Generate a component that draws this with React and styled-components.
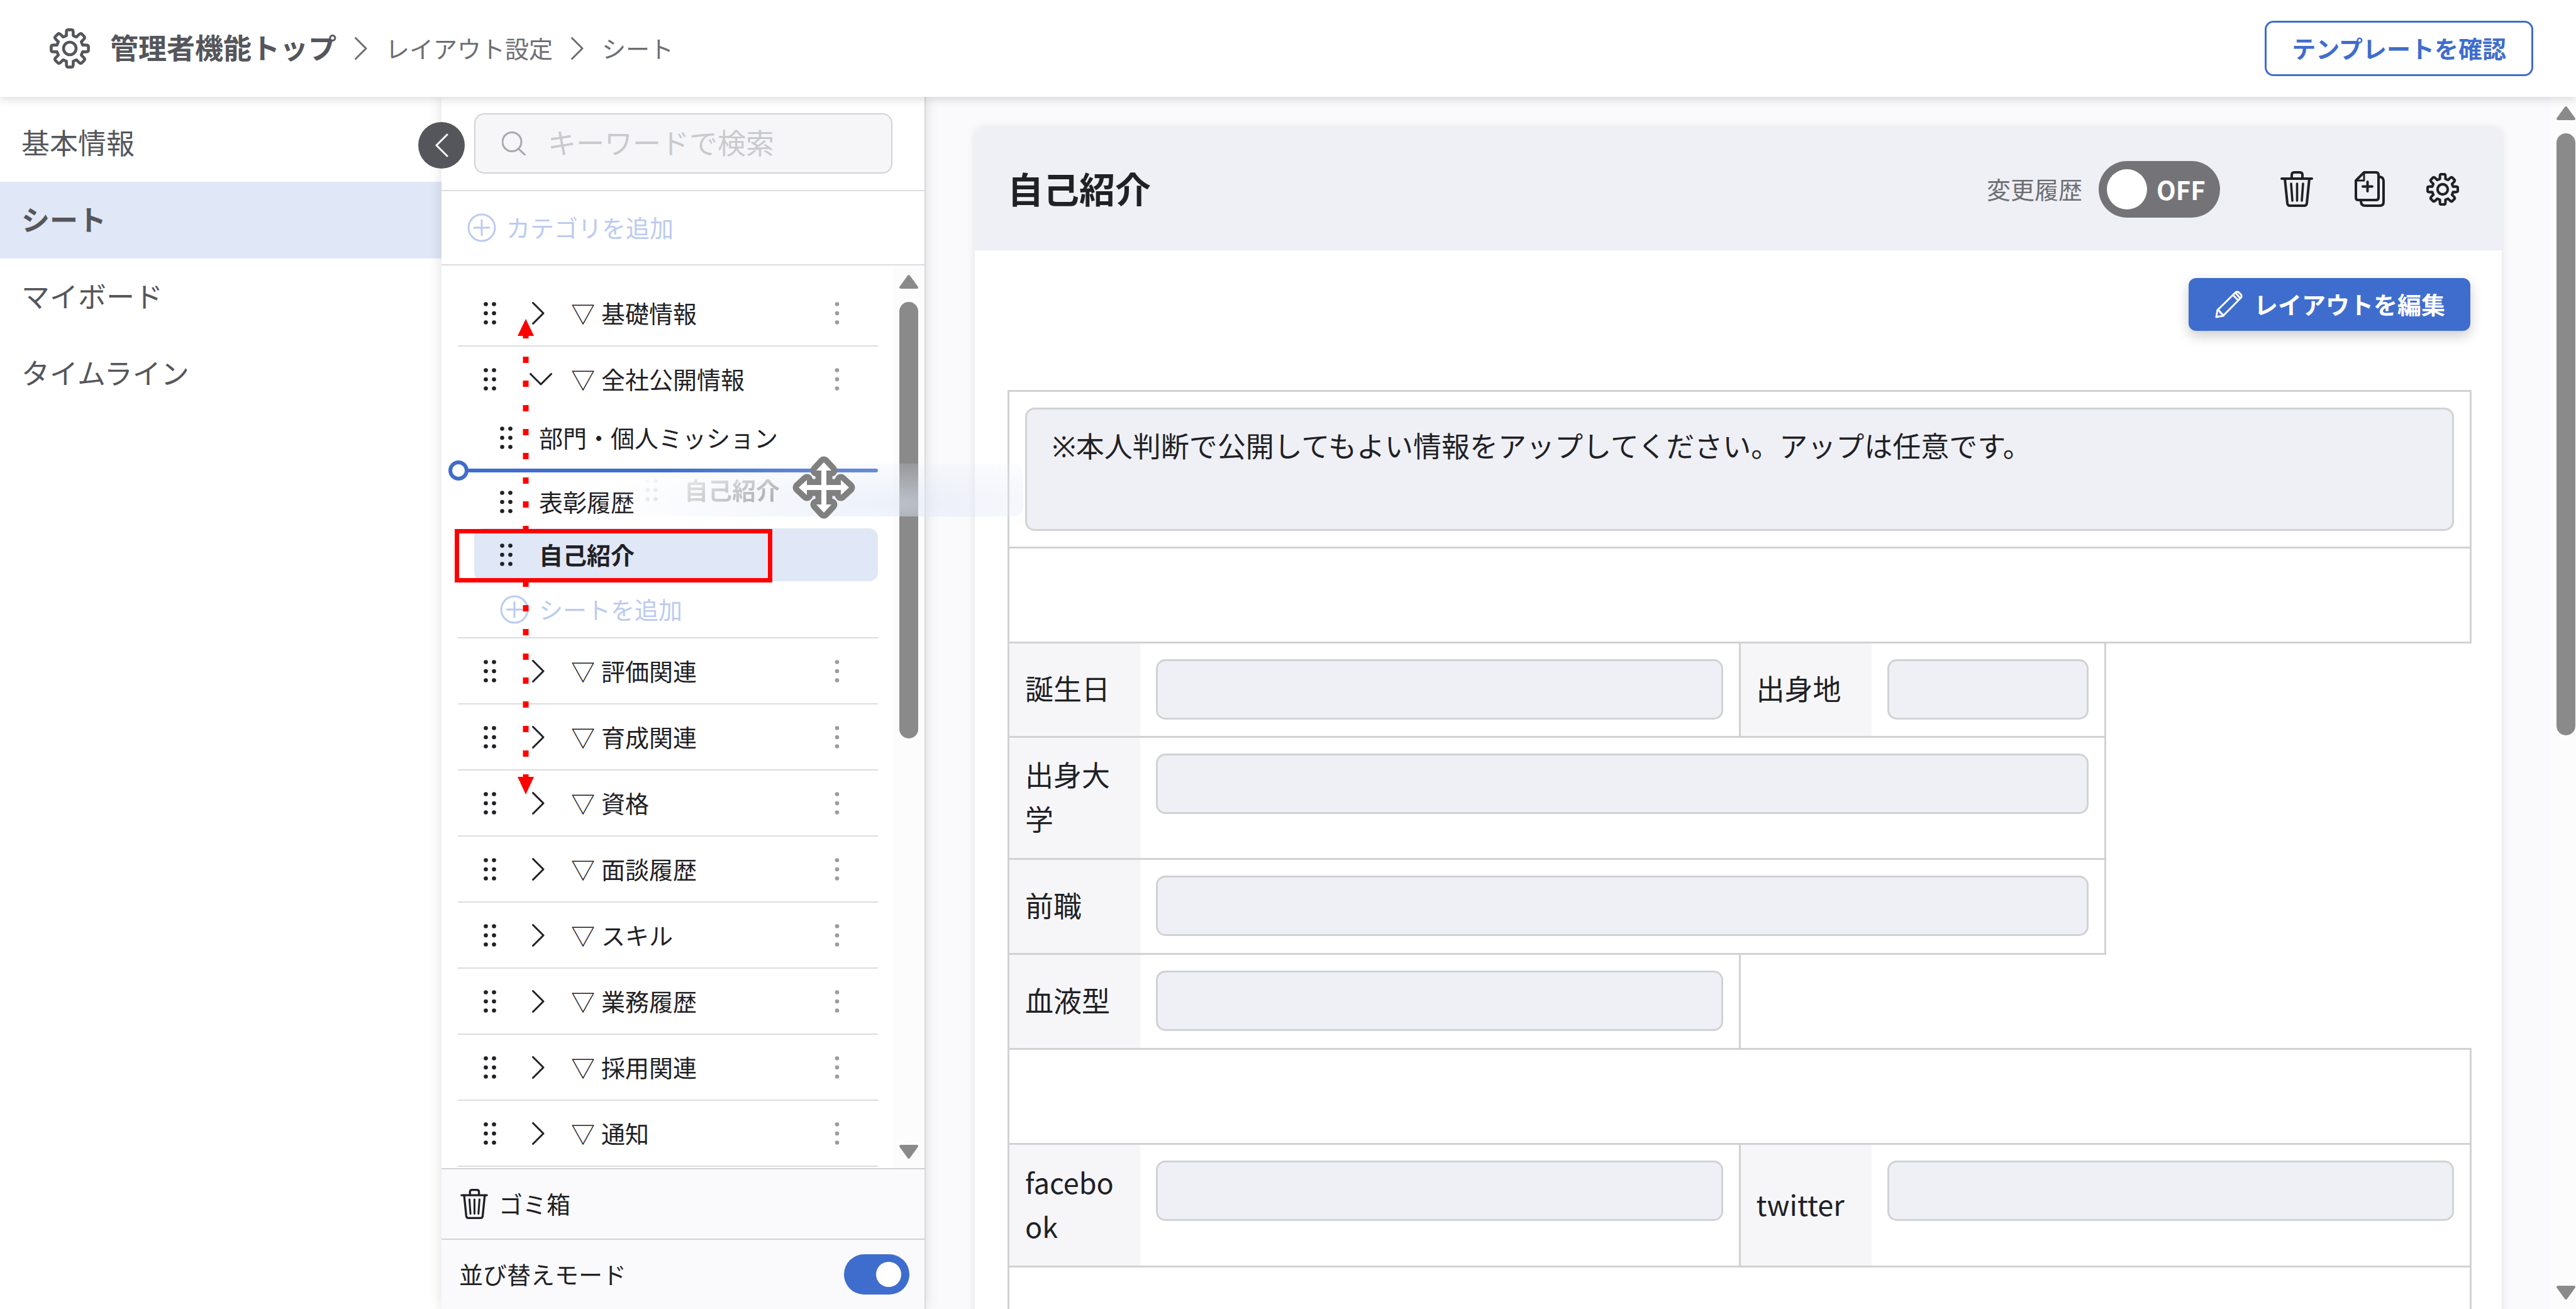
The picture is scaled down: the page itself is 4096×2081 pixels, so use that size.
import React, { useState } from "react";
import styled, { createGlobalStyle, css } from "styled-components";

const c = {
  ink: "#1f2125",
  text: "#55565b",
  muted: "#6d6e73",
  faint: "#9b9ca1",
  placeholder: "#c9cacd",
  blue: "#3f6dcd",
  paleBlue: "#bccbef",
  selected: "#e0e7f6",
  field: "#eff0f5",
  soft: "#f6f6f9",
  page: "#fafafc",
  line: "#d1d2d4",
  divider: "#dcdde1",
  thumb: "#8a8a8a",
  red: "#ff0000",
};

const cjkFirst = '"Noto Sans CJK JP", "Noto Sans", sans-serif';

const GlobalStyle = createGlobalStyle`
  *, *::before, *::after { box-sizing: border-box; }
  body {
    margin: 0;
    background: #fff;
    color: ${c.ink};
    font-family: "Noto Sans", "Noto Sans CJK JP", sans-serif;
    font-size: 38px;
    line-height: 56px;
  }
  button, input, textarea { font: inherit; color: inherit; }
  button { border: 0; padding: 0; background: none; cursor: pointer; }
  a { color: inherit; text-decoration: none; }
  h1, ul { margin: 0; padding: 0; list-style: none; }
`;

/* ---------- icons ---------- */

const Svg = styled.svg`
  display: block;
  flex: none;
  width: ${(p) => p.$w}px;
  height: ${(p) => p.$h}px;
  fill: none;
  stroke: currentColor;
  stroke-linecap: round;
  stroke-linejoin: round;
`;

const gearPath = (() => {
  const at = (a, x, y) =>
    [32 + x * Math.cos(a) - y * Math.sin(a), 32 + x * Math.sin(a) + y * Math.cos(a)]
      .map((n) => n.toFixed(2))
      .join(" ");
  let d = "";
  for (let k = 0; k < 8; k += 1) {
    const a = (k * Math.PI) / 4;
    d += `${k ? "L" : "M"}${at(a, -5.4, -20.4)} L${at(a, -5.4, -25.5)} `;
    d += `Q${at(a, -5.4, -29.6)} ${at(a, -3, -29.6)} L${at(a, 3, -29.6)} `;
    d += `Q${at(a, 5.4, -29.6)} ${at(a, 5.4, -25.5)} L${at(a, 5.4, -20.4)} `;
  }
  return `${d}Z`;
})();

const GearIcon = ({ size, weight = 4.6 }) => (
  <Svg $w={size} $h={size} viewBox="0 0 64 64" strokeWidth={weight} aria-hidden="true">
    <path d={gearPath} />
    <circle cx="32" cy="32" r="10" />
  </Svg>
);

const TrashIcon = ({ w, h }) => (
  <Svg $w={w} $h={h} viewBox="0 0 52 57" strokeWidth="4" aria-hidden="true">
    <path d="M2 12H50" />
    <path d="M18 11V6Q18 2 22 2H31Q35 2 35 6V11" />
    <path d="M7 12L11 51Q11.500 55 15 55H38Q41.500 55 42 51L46 12" />
    <path d="M17 20L19 47M26.500 20V47M36 20L34 47" strokeWidth="3.600" />
  </Svg>
);

const CopyIcon = () => (
  <Svg $w={48} $h={57} viewBox="0 0 48 57" strokeWidth="4" aria-hidden="true">
    <path d="M15 2H34Q38 2 38 6V42Q38 46 34 46H6Q2 46 2 42V15Z" />
    <path d="M15 2V15H2Z" strokeWidth="3" />
    <path d="M38 9Q46 9 46 16V49Q46 55 40 55H17Q10 55 10 48" />
    <path d="M20.500 17V32M13 24.500H28" />
  </Svg>
);

const PencilIcon = () => (
  <Svg $w={44} $h={44} viewBox="0 0 44 44" strokeWidth="3" aria-hidden="true">
    <path d="M2 42L4 31L33 2.500Q36 1 38 3L41 6Q43 8.500 41.500 11L13 40Z" />
    <path d="M4 31Q9 33 8.500 35.500Q11 35.500 13 40M28.500 7L37 15.500M33 4L40 12" />
  </Svg>
);

const PlusCircleIcon = () => (
  <Svg $w={46} $h={46} viewBox="0 0 46 46" strokeWidth="3" aria-hidden="true">
    <circle cx="23" cy="23" r="21" />
    <path d="M23 11V35M11 23H35" />
  </Svg>
);

const SearchIcon = () => (
  <Svg $w={38} $h={38} viewBox="0 0 38 38" strokeWidth="3" aria-hidden="true">
    <circle cx="16" cy="16.500" r="15" />
    <path d="M26.500 27.500L36.500 37" />
  </Svg>
);

const ChevronRight = ({ w = 20, h = 36 }) => (
  <Svg $w={w} $h={h} viewBox="0 0 20 36" strokeWidth="3" aria-hidden="true">
    <path d="M1.500 1.500L18 18L1.500 34.500" />
  </Svg>
);

const ChevronLeft = () => (
  <Svg $w={22} $h={38} viewBox="0 0 22 38" strokeWidth="3" aria-hidden="true">
    <path d="M20 2L3 19L20 36" />
  </Svg>
);

const ChevronDown = () => (
  <Svg $w={36} $h={20} viewBox="0 0 36 20" strokeWidth="3" aria-hidden="true">
    <path d="M1.500 1.500L18 18L34.500 1.500" />
  </Svg>
);

const GripIcon = () => (
  <Svg $w={20} $h={36} viewBox="0 0 20 36" aria-hidden="true">
    <g fill="currentColor" stroke="none">
      {[3.5, 18, 32.5].map((y) => (
        <React.Fragment key={y}>
          <circle cx="3.500" cy={y} r="3.300" />
          <circle cx="16.500" cy={y} r="3.300" />
        </React.Fragment>
      ))}
    </g>
  </Svg>
);

const MoreIcon = () => (
  <Svg $w={8} $h={36} viewBox="0 0 8 36" aria-hidden="true">
    <g fill="currentColor" stroke="none">
      <circle cx="4" cy="3.500" r="3.300" />
      <circle cx="4" cy="18" r="3.300" />
      <circle cx="4" cy="32.500" r="3.300" />
    </g>
  </Svg>
);

const ScrollArrow = ({ down }) => (
  <Svg $w={32} $h={24} viewBox="0 0 32 24" strokeWidth="4" aria-hidden="true">
    <path d={down ? "M3 3H29L16 21Z" : "M3 21H29L16 3Z"} fill="currentColor" />
  </Svg>
);

const MoveCursorIcon = () => {
  const d =
    "M50 10L62 23L54 23V46H77V38L90 50L77 62V54H54V77H62L50 90L38 77H46V54H23V62L10 50L23 38V46H46V23H38Z";
  return (
    <Svg $w={100} $h={100} viewBox="0 0 100 100" aria-hidden="true">
      <path d={d} stroke="#808080" strokeWidth="19" />
      <path d={d} fill="#fff" stroke="none" />
    </Svg>
  );
};

/* ---------- page frame ---------- */

const Page = styled.div`
  display: flex;
  flex-direction: column;
  height: 100vh;
  overflow: hidden;
`;

const Header = styled.header`
  position: relative;
  z-index: 5;
  flex: none;
  display: flex;
  align-items: center;
  justify-content: space-between;
  height: 154px;
  padding: 0 68px 0 79px;
  background: #fff;
  box-shadow: 0 4px 14px rgba(0, 0, 0, 0.14);
`;

const Breadcrumb = styled.nav`
  display: flex;
  align-items: center;
  gap: 29px;
  color: ${c.muted};
`;

const HomeLink = styled.a`
  display: flex;
  align-items: center;
  gap: 32px;
  font-size: 45px;
  font-weight: 700;
  color: ${c.text};
`;

const OutlineButton = styled.button`
  height: 88px;
  padding: 0 40px;
  border: 3px solid ${c.blue};
  border-radius: 14px;
  color: ${c.blue};
  font-weight: 700;
`;

const Body = styled.div`
  flex: 1;
  display: flex;
  min-height: 0;
`;

const SideNav = styled.nav`
  flex: none;
  width: 702px;
  padding-top: 13px;
  background: #fff;
`;

const NavItem = styled.a`
  display: flex;
  align-items: center;
  height: 122px;
  padding: 0 34px;
  font-size: 45px;
  color: ${c.text};
  ${(p) =>
    p.$active &&
    css`
      background: ${c.selected};
      font-weight: 700;
    `}
`;

/* ---------- sheet panel ---------- */

const Panel = styled.aside`
  position: relative;
  z-index: 3;
  flex: none;
  display: flex;
  flex-direction: column;
  width: 770px;
  background: #fff;
  border-right: 2px solid #d8d9dc;
  box-shadow: 0 0 20px rgba(0, 0, 0, 0.13);
`;

const CollapseButton = styled.button`
  position: absolute;
  top: 40px;
  left: -37px;
  display: flex;
  align-items: center;
  justify-content: center;
  width: 74px;
  height: 74px;
  border-radius: 50%;
  background: ${c.text};
  color: #fff;
`;

const SearchArea = styled.div`
  flex: none;
  padding: 26px 51px 26px 52px;
  border-bottom: 2px solid ${c.divider};
`;

const SearchBox = styled.label`
  display: flex;
  align-items: center;
  gap: 35px;
  height: 96px;
  padding: 0 42px;
  border: 2px solid ${c.line};
  border-radius: 16px;
  background: ${c.soft};
  color: #a8a9ac;
`;

const SearchInput = styled.input`
  flex: 1;
  min-width: 0;
  padding: 0;
  border: 0;
  outline: 0;
  background: transparent;
  font-size: 45px;
  &::placeholder {
    color: ${c.placeholder};
    opacity: 1;
  }
`;

const AddButton = styled.button`
  display: flex;
  align-items: center;
  gap: 16px;
  width: 100%;
  color: ${c.paleBlue};
  ${(p) =>
    p.$sheet
      ? css`
          height: 89px;
          padding-left: 67px;
        `
      : css`
          flex: none;
          height: 118px;
          padding-left: 41px;
          border-bottom: 2px solid ${c.divider};
        `}
`;

const ListArea = styled.div`
  flex: 1;
  display: flex;
  min-height: 0;
`;

const List = styled.ul`
  flex: 1;
  min-width: 0;
  padding: 24px 24px 0 26px;
  overflow: hidden;
`;

const Category = styled.li`
  border-bottom: 2px solid ${c.divider};
`;

const CategoryRow = styled.div`
  display: flex;
  align-items: center;
  height: 103px;
  padding: 0 61px 0 41px;
`;

const Expander = styled.button`
  display: flex;
  justify-content: ${(p) => (p.$open ? "center" : "flex-start")};
  width: 36px;
  margin: 0 30px 0 53px;
  padding-left: ${(p) => (p.$open ? 0 : 4)}px;
`;

const CategoryName = styled.span`
  flex: 1;
`;

const MoreButton = styled.button`
  color: ${c.faint};
`;

const SheetList = styled.ul`
  padding-left: 26px;
`;

const SheetRow = styled.li`
  display: flex;
  align-items: center;
  gap: 42px;
  height: 84px;
  padding-left: 41px;
  border-radius: 14px;
  ${(p) =>
    p.$selected &&
    css`
      background: ${c.selected};
      font-weight: 700;
    `}
`;

const DropGap = styled.li`
  height: 18px;
`;

const FooterRow = styled.div`
  flex: none;
  display: flex;
  align-items: center;
  justify-content: ${(p) => (p.$split ? "space-between" : "flex-start")};
  height: 112px;
  padding: 0 24px 0 28px;
  border-top: 2px solid ${c.line};
  background: ${c.page};
`;

const TrashButton = styled.button`
  display: flex;
  align-items: center;
  gap: 17px;
  padding-left: 2px;
`;

const SortSwitch = styled.input`
  appearance: none;
  position: relative;
  width: 104px;
  height: 64px;
  margin: 0;
  border-radius: 32px;
  background: ${c.blue};
  &::before {
    content: "";
    position: absolute;
    top: 12px;
    right: 13px;
    width: 40px;
    height: 40px;
    border-radius: 50%;
    background: #fff;
  }
`;

/* ---------- scroll bar ---------- */

const ScrollLane = styled.div`
  flex: none;
  display: flex;
  flex-direction: column;
  align-items: ${(p) => (p.$edge ? "flex-end" : "center")};
  width: ${(p) => p.$width}px;
  padding: 14px 0;
  background: #fcfcfd;
  color: ${c.thumb};
`;

const ScrollTrack = styled.div`
  flex: 1;
  display: flex;
  flex-direction: column;
  align-items: center;
  width: 32px;
  padding-top: 20px;
`;

const ScrollThumb = styled.div`
  flex: ${(p) => p.$share} 0 0;
  width: 30px;
  border-radius: 15px;
  background: ${c.thumb};
`;

const ScrollRest = styled.div`
  flex: ${(p) => p.$share} 0 0;
`;

const ScrollBar = ({ width, thumb, rest, edge }) => (
  <ScrollLane $width={width} $edge={edge} aria-hidden="true">
    <ScrollArrow />
    <ScrollTrack>
      <ScrollThumb $share={thumb} />
      <ScrollRest $share={rest} />
    </ScrollTrack>
    <ScrollArrow down />
  </ScrollLane>
);

/* ---------- drag overlay ---------- */

const InsertLine = styled.div`
  position: absolute;
  top: 591px;
  left: 27px;
  width: 667px;
  height: 6px;
  border-radius: 3px;
  background: ${c.blue};
  &::before {
    content: "";
    position: absolute;
    top: -13px;
    left: -16px;
    width: 32px;
    height: 32px;
    border: 6px solid ${c.blue};
    border-radius: 50%;
    background: #fff;
  }
`;

const DragGhost = styled.div`
  position: absolute;
  top: 583px;
  left: 283px;
  display: flex;
  align-items: center;
  gap: 42px;
  width: 642px;
  height: 84px;
  padding-left: 41px;
  border-radius: 14px;
  background: ${c.selected};
  font-weight: 700;
  opacity: 0.6;
  mask-image: radial-gradient(ellipse 460px 88px at 430px 64px, #000 0%, transparent 100%);
`;

const RedFrame = styled.div`
  position: absolute;
  top: 687px;
  left: 21px;
  width: 505px;
  height: 85px;
  border: 7px solid ${c.red};
`;

const RangeArrow = styled.svg`
  position: absolute;
  top: 353px;
  left: 120px;
  width: 28px;
  height: 756px;
  fill: ${c.red};
  stroke: ${c.red};
`;

const MoveCursor = styled.div`
  position: absolute;
  top: 571px;
  left: 558px;
`;

/* ---------- main ---------- */

const Main = styled.main`
  flex: 1;
  display: flex;
  min-width: 0;
  background: ${c.page};
`;

const MainScroll = styled.div`
  flex: 1;
  min-width: 0;
  padding: 49px 78px 0;
  overflow: hidden;
`;

const Card = styled.section`
  min-height: 100%;
  border-radius: 14px 14px 0 0;
  background: #fff;
  box-shadow: 0 0 14px rgba(0, 0, 0, 0.1);
`;

const CardHead = styled.div`
  display: flex;
  align-items: center;
  justify-content: space-between;
  height: 195px;
  padding: 0 68px 0 52px;
  border-radius: 14px 14px 0 0;
  background: ${c.field};
`;

const Title = styled.h1`
  font-size: 57px;
  line-height: 84px;
  font-weight: 700;
`;

const HeadTools = styled.div`
  display: flex;
  align-items: center;
  gap: 66px;
`;

const HistoryLabel = styled.label`
  display: flex;
  align-items: center;
  gap: 26px;
  margin-right: 30px;
  color: ${c.muted};
`;

const HistorySwitch = styled.span`
  position: relative;
  display: flex;
  align-items: center;
  gap: 15px;
  width: 193px;
  height: 90px;
  padding-left: 13px;
  border-radius: 45px;
  background: #747478;
  color: #fff;
  font-family: ${cjkFirst};
  font-size: 40px;
  font-weight: 700;
  &::before {
    content: "";
    width: 64px;
    height: 64px;
    border-radius: 50%;
    background: #fff;
  }
  input {
    position: absolute;
    inset: 0;
    width: 100%;
    height: 100%;
    margin: 0;
    opacity: 0;
  }
`;

const CardBody = styled.div`
  padding: 44px 48px 0 52px;
`;

const Actions = styled.div`
  display: flex;
  justify-content: flex-end;
  margin-bottom: 94px;
`;

const PrimaryButton = styled.button`
  display: flex;
  align-items: center;
  gap: 18px;
  height: 84px;
  padding: 0 40px 0 42px;
  margin-right: 2px;
  border-radius: 12px;
  background: ${c.blue};
  color: #fff;
  font-weight: 700;
  box-shadow: 0 8px 20px rgba(0, 0, 0, 0.2);
`;

const Form = styled.form`
  padding: 3px 0 0 3px;
  font-size: 45px;
  line-height: 70px;
`;

const FormRow = styled.div`
  display: flex;
  min-height: ${(p) => p.$h}px;
`;

const Cell = styled.div`
  flex: none;
  display: flex;
  width: ${(p) => (p.$first ? `calc(${p.$span}% + 3px)` : `calc(${p.$span}% + 3px)`)};
  margin: -3px 0 0 -3px;
  border: 3px solid ${c.line};
`;

const FieldLabel = styled.label`
  flex: none;
  display: flex;
  align-items: center;
  width: 208px;
  padding: 0 25px 5px;
  background: ${c.soft};
  font-family: ${cjkFirst};
  word-break: break-all;
`;

const FieldArea = styled.div`
  flex: 1;
  min-width: 0;
  padding: 25px;
`;

const fieldLook = css`
  display: block;
  width: 100%;
  border: 3px solid ${c.line};
  border-radius: 15px;
  outline: 0;
  background: ${c.field};
`;

const TextField = styled.input`
  ${fieldLook}
  height: 96px;
  padding: 0 40px;
`;

const TextBox = styled.textarea`
  ${fieldLook}
  height: 196px;
  padding: 24px 40px;
  resize: none;
`;

const Field = ({ id, label, span }) => (
  <Cell $span={span}>
    <FieldLabel htmlFor={id}>
      <span>{label}</span>
    </FieldLabel>
    <FieldArea>
      <TextField id={id} readOnly />
    </FieldArea>
  </Cell>
);

/* ---------- data ---------- */

const navItems = ["基本情報", "シート", "マイボード", "タイムライン"];

const categories = [
  { name: "基礎情報" },
  { name: "全社公開情報", open: true },
  { name: "評価関連" },
  { name: "育成関連" },
  { name: "資格" },
  { name: "面談履歴" },
  { name: "スキル" },
  { name: "業務履歴" },
  { name: "採用関連" },
  { name: "通知" },
];

const formRows = [
  { h: 150, fields: [["birthday", "誕生日", 50], ["birthplace", "出身地", 25]] },
  { h: 194, fields: [["university", "出身大学", 75]] },
  { h: 151, fields: [["career", "前職", 75]] },
  { h: 151, fields: [["blood", "血液型", 50]] },
  { h: 151, blank: true },
  { h: 195, fields: [["facebook", "facebook", 50], ["twitter", "twitter", 50]] },
  { h: 151, blank: true },
];

const upperDashes = [60, 98, 137, 175, 213, 252, 290, 329];
const lowerDashes = [416, 455, 493, 532, 570, 608, 647, 686];

const CategoryItem = ({ category }) => (
  <Category>
    <CategoryRow>
      <GripIcon />
      <Expander type="button" $open={category.open} aria-label={category.name}>
        {category.open ? <ChevronDown /> : <ChevronRight />}
      </Expander>
      <CategoryName>▽ {category.name}</CategoryName>
      <MoreButton type="button" aria-label="メニュー">
        <MoreIcon />
      </MoreButton>
    </CategoryRow>
    {category.open && (
      <>
        <SheetList>
          <SheetRow>
            <GripIcon />
            部門・個人ミッション
          </SheetRow>
          <DropGap />
          <SheetRow>
            <GripIcon />
            表彰履歴
          </SheetRow>
          <SheetRow $selected>
            <GripIcon />
            自己紹介
          </SheetRow>
        </SheetList>
        <AddButton type="button" $sheet>
          <PlusCircleIcon />
          シートを追加
        </AddButton>
      </>
    )}
  </Category>
);

export default function App() {
  const [sorting, setSorting] = useState(true);
  const [history, setHistory] = useState(false);

  return (
    <Page>
      <GlobalStyle />
      <Header>
        <Breadcrumb>
          <HomeLink href="#top">
            <GearIcon size={64} />
            管理者機能トップ
          </HomeLink>
          <ChevronRight />
          <a href="#layout">レイアウト設定</a>
          <ChevronRight />
          <span>シート</span>
        </Breadcrumb>
        <OutlineButton type="button">テンプレートを確認</OutlineButton>
      </Header>

      <Body>
        <SideNav>
          {navItems.map((item) => (
            <NavItem key={item} href="#nav" $active={item === "シート"}>
              {item}
            </NavItem>
          ))}
        </SideNav>

        <Panel>
          <SearchArea>
            <SearchBox>
              <SearchIcon />
              <SearchInput type="text" placeholder="キーワードで検索" aria-label="キーワードで検索" />
            </SearchBox>
          </SearchArea>
          <AddButton type="button">
            <PlusCircleIcon />
            カテゴリを追加
          </AddButton>
          <ListArea>
            <List>
              {categories.map((category) => (
                <CategoryItem key={category.name} category={category} />
              ))}
            </List>
            <ScrollBar width={50} thumb={696} rest={647} />
          </ListArea>
          <FooterRow>
            <TrashButton type="button">
              <TrashIcon w={44} h={48} />
              ゴミ箱
            </TrashButton>
          </FooterRow>
          <FooterRow $split>
            <label htmlFor="sort-mode">並び替えモード</label>
            <SortSwitch
              id="sort-mode"
              type="checkbox"
              checked={sorting}
              onChange={() => setSorting(!sorting)}
            />
          </FooterRow>

          <CollapseButton type="button" aria-label="閉じる">
            <ChevronLeft />
          </CollapseButton>
          <InsertLine />
          <DragGhost aria-hidden="true">
            <GripIcon />
            自己紹介
          </DragGhost>
          <RangeArrow viewBox="0 0 28 756" aria-hidden="true">
            <path d="M14 0L27 27H1Z" stroke="none" />
            <path d="M14 756L27 728H1Z" stroke="none" />
            <path d="M14 26V31M14 724V730" strokeWidth="9" />
            {[...upperDashes, ...lowerDashes].map((y) => (
              <path key={y} d={`M14 ${y}v10`} strokeWidth="9" />
            ))}
          </RangeArrow>
          <RedFrame />
          <MoveCursor>
            <MoveCursorIcon />
          </MoveCursor>
        </Panel>

        <Main>
          <MainScroll>
            <Card>
              <CardHead>
                <Title>自己紹介</Title>
                <HeadTools>
                  <HistoryLabel>
                    変更履歴
                    <HistorySwitch>
                      OFF
                      <input
                        type="checkbox"
                        checked={history}
                        onChange={() => setHistory(!history)}
                      />
                    </HistorySwitch>
                  </HistoryLabel>
                  <button type="button" aria-label="削除">
                    <TrashIcon w={52} h={57} />
                  </button>
                  <button type="button" aria-label="複製">
                    <CopyIcon />
                  </button>
                  <button type="button" aria-label="設定">
                    <GearIcon size={52} weight={5} />
                  </button>
                </HeadTools>
              </CardHead>
              <CardBody>
                <Actions>
                  <PrimaryButton type="button">
                    <PencilIcon />
                    レイアウトを編集
                  </PrimaryButton>
                </Actions>
                <Form>
                  <FormRow $h={249}>
                    <Cell $span={100}>
                      <FieldArea>
                        <TextBox
                          readOnly
                          aria-label="説明"
                          value="※本人判断で公開してもよい情報をアップしてください。アップは任意です。"
                        />
                      </FieldArea>
                    </Cell>
                  </FormRow>
                  <FormRow $h={151}>
                    <Cell $span={100} />
                  </FormRow>
                  {formRows.map((row, i) => (
                    <FormRow key={i} $h={row.h}>
                      {row.blank ? (
                        <Cell $span={100} />
                      ) : (
                        row.fields.map(([id, label, span]) => (
                          <Field key={id} id={id} label={label} span={span} />
                        ))
                      )}
                    </FormRow>
                  ))}
                </Form>
              </CardBody>
            </Card>
          </MainScroll>
          <ScrollBar width={40} thumb={957} rest={874} edge />
        </Main>
      </Body>
    </Page>
  );
}
